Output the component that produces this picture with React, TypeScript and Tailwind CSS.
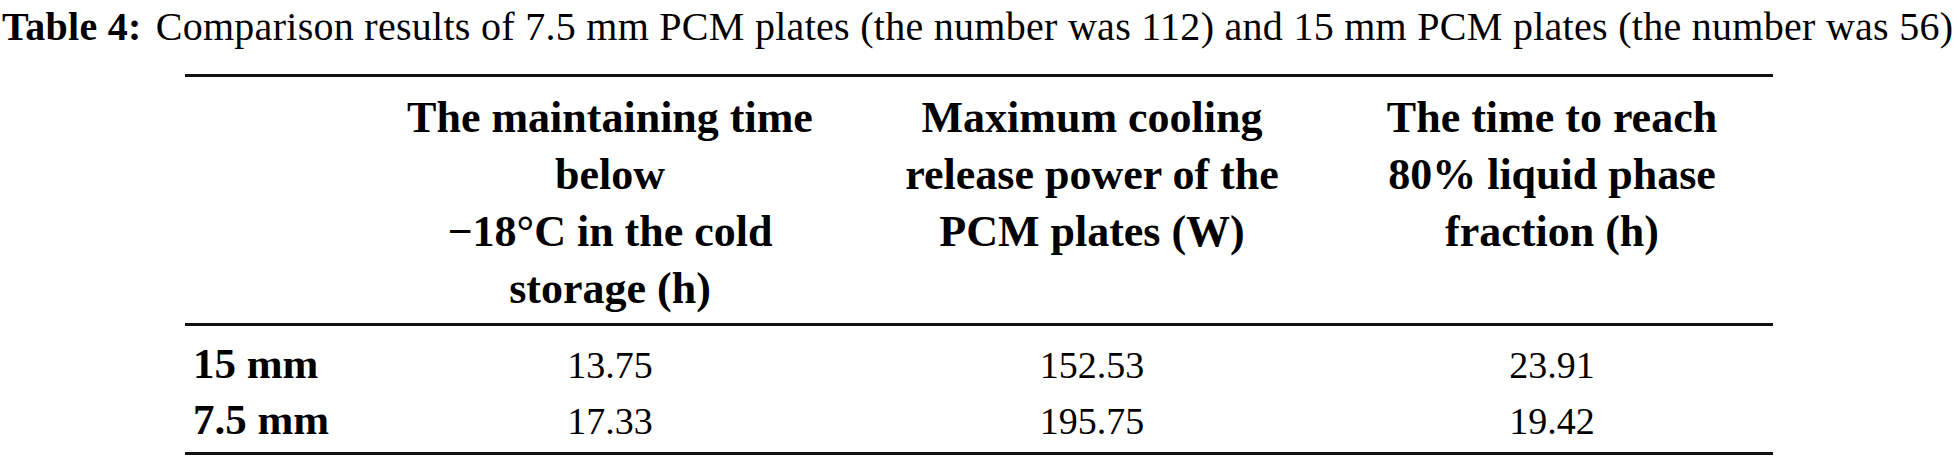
import React from "react";

const serif = "font-['Liberation_Serif',serif]";

function Rule() {
  return <div className="h-[3px] w-full bg-[#111]" />;
}

export default function App() {
  const headers = [
    ["The maintaining time", "below", "\u221218\u00b0C in the cold", "storage (h)"],
    ["Maximum cooling", "release power of the", "PCM plates (W)"],
    ["The time to reach", "80% liquid phase", "fraction (h)"],
  ];
  const rows = [
    ["15 mm", "13.75", "152.53", "23.91"],
    ["7.5 mm", "17.33", "195.75", "19.42"],
  ];
  return (
    <div className={`w-[1958px] h-[462px] bg-white text-black ${serif} overflow-hidden`}>
      <div className="h-[74px] pl-[2px] pt-[2px] text-[40px] leading-[50px] tracking-[0.28px] whitespace-nowrap">
        <span className="font-bold">Table 4:</span>
        <span className="pl-[14px]">
          Comparison results of 7.5 mm PCM plates (the number was 112) and 15 mm PCM plates (the number was 56)
        </span>
      </div>
      <div className="ml-[185px] w-[1588px]">
        <Rule />
        <div className="grid grid-cols-[182px_486px_478px_442px] pt-[12px] pb-[6px] text-[44px] leading-[57px] font-bold">
          <div />
          {headers.map((h, i) => (
            <div key={i} className="flex flex-col items-center text-center">
              {h.map((l, j) => (
                <span key={j} className="whitespace-nowrap">
                  {l}
                </span>
              ))}
            </div>
          ))}
        </div>
        <Rule />
        <div className="pt-[10px] pb-[4px] text-[38px] leading-[56px]">
          {rows.map((r, i) => (
            <div key={i} className="grid grid-cols-[182px_486px_478px_442px] items-baseline h-[56px]">
              <div className="pl-[8px] text-[43px] font-bold whitespace-nowrap">{r[0]}</div>
              <div className="text-center">{r[1]}</div>
              <div className="text-center">{r[2]}</div>
              <div className="text-center">{r[3]}</div>
            </div>
          ))}
        </div>
        <Rule />
      </div>
    </div>
  );
}
